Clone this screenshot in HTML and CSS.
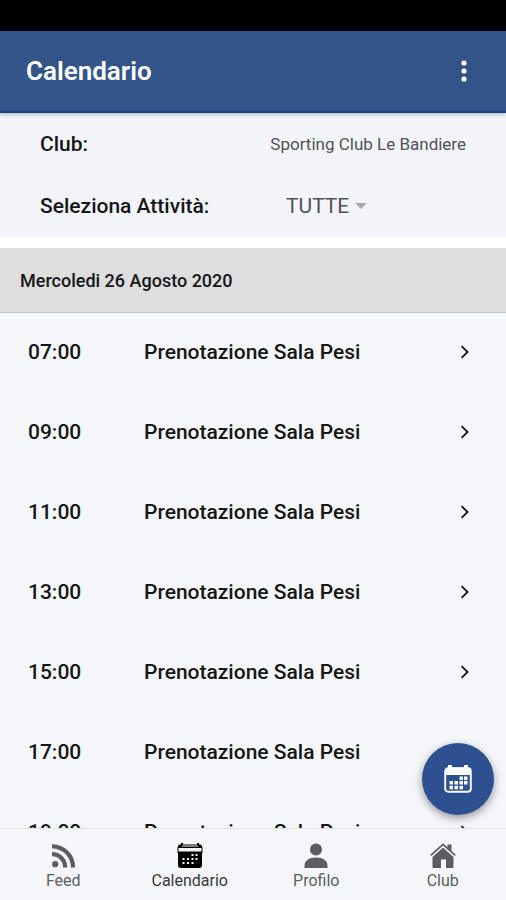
FILE: index.html
```html
<!DOCTYPE html>
<html lang="it">
<head>
<meta charset="utf-8">
<meta name="viewport" content="width=device-width, initial-scale=1">
<title>Calendario</title>
<link rel="stylesheet" href="styles.css">
</head>
<body>
<svg class="defs" aria-hidden="true">
  <symbol id="chevron" viewBox="0 0 10 14"><path d="M1.5 1.2 7.6 7 1.5 12.8" fill="none" stroke="currentColor" stroke-width="1.8"/></symbol>
</svg>
<div class="app">
  <div class="status-bar"></div>
  <header class="app-bar">
    <h1 class="title">Calendario</h1>
    <button class="menu-button" type="button" aria-label="Menu">
      <svg width="8" height="22" viewBox="0 0 8 22" fill="currentColor"><circle cx="4" cy="3" r="2.600"/><circle cx="4" cy="11" r="2.600"/><circle cx="4" cy="19" r="2.600"/></svg>
    </button>
  </header>
  <section class="filters">
    <div class="filter">
      <span class="filter-label">Club:</span>
      <span class="club-name">Sporting Club Le Bandiere</span>
    </div>
    <div class="filter">
      <label class="filter-label" for="activity">Seleziona Attività:</label>
      <span class="picker">
        <select id="activity"><option>TUTTE</option></select>
        <svg class="caret" width="12" height="6" viewBox="0 0 12 6"><path d="M0 0h12L6 6z" fill="currentColor"/></svg>
      </span>
    </div>
  </section>
  <main class="schedule">
    <h2 class="date">Mercoledi 26 Agosto 2020</h2>
    <ul class="slots">
      <li><a class="slot" href="#"><time>07:00</time><span>Prenotazione Sala Pesi</span><svg class="chevron"><use href="#chevron"/></svg></a></li>
      <li><a class="slot" href="#"><time>09:00</time><span>Prenotazione Sala Pesi</span><svg class="chevron"><use href="#chevron"/></svg></a></li>
      <li><a class="slot" href="#"><time>11:00</time><span>Prenotazione Sala Pesi</span><svg class="chevron"><use href="#chevron"/></svg></a></li>
      <li><a class="slot" href="#"><time>13:00</time><span>Prenotazione Sala Pesi</span><svg class="chevron"><use href="#chevron"/></svg></a></li>
      <li><a class="slot" href="#"><time>15:00</time><span>Prenotazione Sala Pesi</span><svg class="chevron"><use href="#chevron"/></svg></a></li>
      <li><a class="slot" href="#"><time>17:00</time><span>Prenotazione Sala Pesi</span><svg class="chevron"><use href="#chevron"/></svg></a></li>
      <li><a class="slot" href="#"><time>19:00</time><span>Prenotazione Sala Pesi</span><svg class="chevron"><use href="#chevron"/></svg></a></li>
    </ul>
  </main>
  <nav class="tabs">
    <a class="tab" href="#">
      <svg width="26" height="26" viewBox="0 0 26 26"><circle cx="5.2" cy="21.2" r="3.1" fill="currentColor"/><path d="M2 11.2A13.1 13.1 0 0 1 15.2 24.4M2 3.4A20.9 20.9 0 0 1 23 24.4" fill="none" stroke="currentColor" stroke-width="4.2"/></svg>
      <span>Feed</span>
    </a>
    <a class="tab active" href="#" aria-current="page">
      <svg width="26" height="26" viewBox="0 0 26 26"><path fill="currentColor" d="M3 1.500h20q2 0 2 2V5H1V3.500q0-2 2-2zM1 8.500h24V22q0 3-3 3H4q-3 0-3-3z"/><path d="M1 4v6M25 4v6" stroke="currentColor"/><path d="M5 0v3M21 0v3" stroke="currentColor" stroke-width="2"/><path fill="#f5f6fa" d="M5 2.500h16v1H5zM14.500 11h2v2h-2zM18.500 11h2v2h-2zM5.500 15h2v2h-2zM10 15h2v2h-2zM14.500 15h2v2h-2zM18.500 15h2v2h-2zM5.500 19h2v2h-2zM10 19h2v2h-2zM14.500 19h2v2h-2z"/></svg>
      <span>Calendario</span>
    </a>
    <a class="tab" href="#">
      <svg width="26" height="26" viewBox="0 0 26 26" fill="currentColor"><circle cx="13" cy="6.500" r="6"/><path d="M1.500 25v-2.500C1.500 18 6 14.500 13 14.500S24.500 18 24.500 22.500V25z"/></svg>
      <span>Profilo</span>
    </a>
    <a class="tab" href="#">
      <svg width="26" height="26" viewBox="0 0 26 26" fill="currentColor"><path d="M17.500 1.500h4v7l-4-3.600z"/><path d="M13 4.500 23.500 14v10q0 1-1 1H16v-8.500h-5V25H3.500q-1 0-1-1V14z"/><path d="M.8 12.400 13 1.400l12.200 11" fill="none" stroke="currentColor" stroke-width="1.700"/><path d="M1.500 14 13 3.600 24.500 14" fill="none" stroke="#f5f6fa"/></svg>
      <span>Club</span>
    </a>
  </nav>
  <button class="fab" type="button" aria-label="Apri calendario">
    <svg width="28" height="28" viewBox="0 0 28 28"><rect x="1.200" y="3.200" width="25.600" height="23.600" rx="3" fill="none" stroke="currentColor" stroke-width="1.900"/><path fill="currentColor" d="M4 2.500h20q2.500 0 2.500 2.500v5h-25V5q0-2.500 2.500-2.500zM4 0h4v3H4zM20 0h4v3h-4zM15.500 11.500h3.500v3.500h-3.500zM20 11.500h3.500v3.500H20zM5.500 16h3.500v3.500H5.500zM10.500 16h3.500v3.500h-3.500zM15.500 16h3.500v3.500h-3.500zM20 16h3.500v3.500H20zM5.500 20.800h3.500v3.500H5.500zM10.500 20.800h3.500v3.500h-3.500zM15.500 20.800h3.500v3.500h-3.500z"/></svg>
  </button>
</div>
</body>
</html>
```
FILE: styles.css
```css
* { box-sizing: border-box; }

body {
  margin: 0;
  background: #fff;
  color: #151618;
  font-family: Roboto, "Liberation Sans", sans-serif;
  font-size: 21px;
  line-height: 24px;
}

a { color: inherit; text-decoration: none; }
button { border: 0; padding: 0; cursor: pointer; }
.defs { position: absolute; width: 0; height: 0; }

.app {
  position: relative;
  display: flex;
  flex-direction: column;
  height: 100vh;
  overflow: hidden;
}

.status-bar { flex: none; height: 31px; background: #000; }

.app-bar {
  position: relative;
  flex: none;
  display: flex;
  align-items: center;
  justify-content: space-between;
  height: 82px;
  padding: 0 36px 0 26px;
  background: #325489;
  border-bottom: 2px solid #194484;
  box-shadow: 0 1px 4px rgba(0, 0, 0, .3);
  color: #fff;
}

.title { margin: 0; font-size: 26px; line-height: 32px; font-weight: 600; }

.menu-button {
  display: flex;
  justify-content: center;
  width: 12px;
  background: none;
  color: #fff;
}

.filters { flex: none; padding: 0 40px 1px; background: #f4f5fa; }

.filter {
  display: flex;
  align-items: center;
  justify-content: space-between;
  height: 62px;
}

.filter-label { font-weight: 500; }
.club-name { color: #505257; font-size: 17px; }

.picker { position: relative; display: flex; align-items: center; width: 180px; }

.picker select {
  appearance: none;
  width: 100%;
  margin: 0;
  padding: 0;
  border: 0;
  background: none;
  color: #505257;
  font: inherit;
}

.caret { position: absolute; left: 69px; color: #a9aaae; pointer-events: none; }

.schedule {
  flex: 1;
  min-height: 0;
  margin-top: 10px;
  overflow: hidden;
  background: #f5f6fa;
}

.date {
  margin: 0;
  padding: 21px 20px 19px;
  background: #dedede;
  border-bottom: 1px solid #c2c4c6;
  font-size: 18px;
  font-weight: 500;
}

.slots { margin: 0; padding: 0; list-style: none; }

.slot {
  display: grid;
  grid-template-columns: 116px 1fr 10px;
  align-items: center;
  height: 80px;
  padding: 0 36px 2px 28px;
  font-weight: 500;
}

.chevron { width: 10px; height: 14px; }

.tabs {
  flex: none;
  display: grid;
  grid-template-columns: repeat(4, 1fr);
  height: 72px;
  background: #f5f6fa;
  border-top: 1px solid #e3e4e8;
}

.tab {
  display: flex;
  flex-direction: column;
  align-items: center;
  padding-top: 14px;
  color: #5c5d60;
  font-size: 16px;
}

.tab svg { display: block; }
.active { color: #000; }
.active span { color: #38393c; }

.fab {
  position: absolute;
  right: 12px;
  bottom: 85px;
  display: flex;
  align-items: center;
  justify-content: center;
  width: 72px;
  height: 72px;
  border-radius: 50%;
  background: #2c5090;
  box-shadow: 0 3px 8px rgba(0, 0, 0, .4);
  color: #fff;
}
```
